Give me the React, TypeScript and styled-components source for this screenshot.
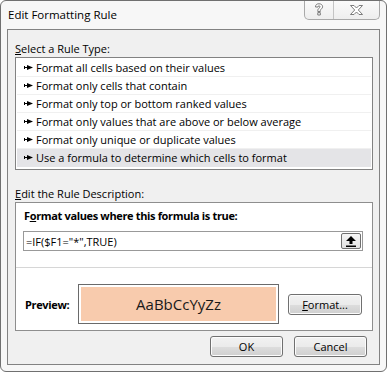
import React from "react";
import styled, { createGlobalStyle } from "styled-components";

const GlobalStyle = createGlobalStyle`
  body {
    margin: 0;
    background: #ffffff;
    font-family: "Open Sans", "Noto Sans", sans-serif;
    font-size: 11px;
    color: #000000;
  }
`;

const Window = styled.div`
  width: 387px;
  height: 372px;
  box-sizing: border-box;
  border: 1px solid #707070;
  border-radius: 6px;
  background: #f7f7f7;
  padding: 0 6px 6px;
  display: flex;
  flex-direction: column;
  overflow: hidden;
`;

const TitleBar = styled.div`
  height: 28px;
  flex-shrink: 0;
  display: flex;
  justify-content: space-between;
  align-items: flex-start;
`;

const Title = styled.div`
  padding: 5px 0 0 1px;
  font-size: 11.5px;
  line-height: 18px;
  color: #000;
`;

const Caption = styled.div`
  display: flex;
  margin-top: -1px;
  border: 1px solid #a9a9a9;
  border-top: none;
  border-radius: 0 0 5px 5px;
  overflow: hidden;
  background: linear-gradient(#fbfbfb, #eeeeee);
`;

const CaptionButton = styled.div<{ $w: number; $divider?: boolean }>`
  width: ${(p) => p.$w}px;
  height: 19px;
  display: flex;
  align-items: center;
  justify-content: center;
  border-right: ${(p) => (p.$divider ? "1px solid #c4c4c4" : "none")};
`;

const Client = styled.div`
  flex: 1;
  border: 1px solid #828282;
  background: #f0f0f0;
  padding: 11px 6px 0 7px;
  display: flex;
  flex-direction: column;
`;

const Label = styled.div<{ $gap?: number }>`
  line-height: 16px;
  margin-top: ${(p) => p.$gap || 0}px;
`;

const List = styled.div`
  height: 113px;
  box-sizing: border-box;
  border: 1px solid #828282;
  padding: 1px;
  background: #ffffff;
`;

const Row = styled.div<{ $selected?: boolean }>`
  height: 18px;
  box-sizing: border-box;
  display: flex;
  align-items: center;
  gap: 3px;
  padding-left: 7px;
  background: ${(p) => (p.$selected ? "#e4e4e7" : "#ffffff")};
  border-bottom: 1px solid ${(p) => (p.$selected ? "#e4e4e7" : "#f0f0f0")};
  white-space: nowrap;
`;

const Panel = styled.div`
  border: 1px solid #8e8e8e;
  background: #ffffff;
`;

const Upper = styled.div`
  padding: 5px 9px 16px 7px;
`;

const Bold = styled.div`
  font-weight: bold;
  letter-spacing: -0.35px;
  line-height: 16px;
  padding-left: 1px;
`;

const Input = styled.div`
  margin-top: 7px;
  height: 20px;
  box-sizing: border-box;
  border: 1px solid #999999;
  display: flex;
  align-items: center;
  justify-content: space-between;
  padding: 0 1px 0 2px;
`;

const RefButton = styled.div`
  width: 20px;
  height: 16px;
  box-sizing: border-box;
  border: 1px solid #707070;
  border-radius: 2px;
  background: linear-gradient(#f6f6f6, #e2e2e2);
  display: flex;
  align-items: center;
  justify-content: center;
`;

const Lower = styled.div`
  border-top: 1px solid #d6d6d6;
  padding: 16px 0 6px 9px;
  display: flex;
  align-items: center;
`;

const PreviewLabel = styled.div`
  font-weight: bold;
  letter-spacing: -0.35px;
  width: 53px;
`;

const PreviewBox = styled.div`
  width: 201px;
  height: 40px;
  box-sizing: border-box;
  border: 1px solid #6a6a6a;
  padding: 2px;
  background: #ffffff;
`;

const Swatch = styled.div`
  height: 100%;
  background: #f8cbad;
  display: flex;
  align-items: center;
  justify-content: center;
  font-size: 15px;
  color: #1a1a1a;
`;

const Button = styled.div<{ $w: number }>`
  width: ${(p) => p.$w}px;
  height: 21px;
  box-sizing: border-box;
  border: 1px solid #707070;
  border-radius: 3px;
  background: linear-gradient(#f2f2f2 0%, #ebebeb 50%, #dddddd 51%, #cfcfcf 100%);
  box-shadow: inset 0 0 0 1px #fcfcfc;
  display: flex;
  align-items: center;
  justify-content: center;
  line-height: 1;
`;

const FormatButton = styled(Button)`
  margin-left: 9px;
`;

const Footer = styled.div`
  margin-top: 5px;
  margin-right: 6px;
  display: flex;
  justify-content: flex-end;
  gap: 11px;
`;

const Bullet = () => (
  <svg width="9" height="5" viewBox="0 0 9 5">
    <rect x="0" y="1" width="1" height="3" fill="#000" />
    <rect x="0" y="2" width="4" height="1" fill="#000" />
    <polygon points="3,0 9,2.5 3,5" fill="#000" />
  </svg>
);

const rules = [
  "Format all cells based on their values",
  "Format only cells that contain",
  "Format only top or bottom ranked values",
  "Format only values that are above or below average",
  "Format only unique or duplicate values",
  "Use a formula to determine which cells to format",
];

export default function App() {
  return (
    <>
      <GlobalStyle />
      <Window>
        <TitleBar>
          <Title>Edit Formatting Rule</Title>
          <Caption>
            <CaptionButton $w={28} $divider>
              <svg width="10" height="13" viewBox="0 0 10 13">
                <path
                  d="M1.5 4 C1.5 1.5 3 0.8 5 0.8 C7.2 0.8 8.6 2 8.6 3.8 C8.6 5.6 6.5 6 6.3 7.6 L6.3 8.5 L3.8 8.5 L3.8 7.4 C3.8 5.4 6 5 6 3.8 C6 3.1 5.6 2.8 5 2.8 C4.2 2.8 4 3.4 4 4 Z M3.8 9.6 H6.3 V12 H3.8 Z"
                  fill="#ffffff"
                  stroke="#6e6e6e"
                  strokeWidth="0.9"
                />
              </svg>
            </CaptionButton>
            <CaptionButton $w={45}>
              <svg width="13" height="10" viewBox="0 0 13 10">
                <path
                  d="M0.5 0.5 H4 L6.5 3 L9 0.5 H12.5 L8.3 5 L12.5 9.5 H9 L6.5 7 L4 9.5 H0.5 L4.7 5 Z"
                  fill="#ffffff"
                  stroke="#6e6e6e"
                  strokeWidth="0.9"
                />
              </svg>
            </CaptionButton>
          </Caption>
        </TitleBar>
        <Client>
          <Label>
            <u>S</u>elect a Rule Type:
          </Label>
          <List>
            {rules.map((r, i) => (
              <Row key={r} $selected={i === rules.length - 1}>
                <Bullet />
                <span>{r}</span>
              </Row>
            ))}
          </List>
          <Label $gap={16}>
            <u>E</u>dit the Rule Description:
          </Label>
          <Panel>
            <Upper>
              <Bold>
                F<u>o</u>rmat values where this formula is true:
              </Bold>
              <Input>
                <span>=IF($F1="*",TRUE)</span>
                <RefButton>
                  <svg width="10" height="11" viewBox="0 0 10 11">
                    <polygon points="5,0 10,5 6.5,5 6.5,8 3.5,8 3.5,5 0,5" fill="#000" />
                    <rect x="0" y="9.5" width="10" height="1.5" fill="#000" />
                  </svg>
                </RefButton>
              </Input>
            </Upper>
            <Lower>
              <PreviewLabel>Preview:</PreviewLabel>
              <PreviewBox>
                <Swatch>AaBbCcYyZz</Swatch>
              </PreviewBox>
              <FormatButton $w={74}>
                <span>
                  <u>F</u>ormat...
                </span>
              </FormatButton>
            </Lower>
          </Panel>
          <Footer>
            <Button $w={73}>OK</Button>
            <Button $w={73}>Cancel</Button>
          </Footer>
        </Client>
      </Window>
    </>
  );
}
